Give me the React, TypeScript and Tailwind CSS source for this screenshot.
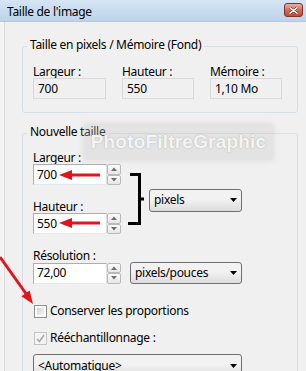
import React from "react";

function SpinBtn({ up }: { up?: boolean }) {
  return (
    <div className="flex-1 flex items-center justify-center border border-[#b9b9b9] rounded-[2px] bg-gradient-to-b from-[#fbfbfb] to-[#e6e6e6]">
      <svg width="6" height="4" viewBox="0 0 6 4">
        <path d={up ? "M0 4 L3 0.5 L6 4 Z" : "M0 0 L3 3.5 L6 0 Z"} fill="#6e6e6e" />
      </svg>
    </div>
  );
}

function Spinner() {
  return (
    <div className="flex flex-col w-[14px] h-[21px]">
      <SpinBtn up />
      <SpinBtn />
    </div>
  );
}

function Edit({ value }: { value: string }) {
  return (
    <div className="flex items-center">
      <div className="w-[74px] h-[21px] flex items-center pl-[3px] bg-white border border-[#abadb3] border-b-[#e3e9ef] border-r-[#dbdfe6]">
        {value}
      </div>
      <Spinner />
    </div>
  );
}

function Arrow() {
  return (
    <svg width="7" height="4" viewBox="0 0 7 4" className="shrink-0">
      <path d="M0 0 L7 0 L3.5 4 Z" fill="#000" />
    </svg>
  );
}

function ReadBox({ value }: { value: string }) {
  return (
    <div className="h-[21px] flex items-center pl-[4px] border border-[#d9d9d9] bg-[#f0f0f0]">
      {value}
    </div>
  );
}

export default function App() {
  return (
    <div className="relative w-[306px] h-[371px] overflow-hidden bg-[#f0f0f0] text-black text-[12px] leading-[16px] tracking-[-0.3px] font-['Noto_Sans',sans-serif]">
      {/* Title bar */}
      <div className="h-[22px] flex justify-between pl-[7px] pr-[3px] bg-gradient-to-b from-[#d6e5f4] to-[#bdd3ea] border-b border-[#b4c8dc]">
        <span className="mt-[4px]">Taille de l'image</span>
        <div className="mt-[3px] w-[19px] h-[14px] flex items-center justify-center rounded-[3px] border border-[#7a3428] bg-gradient-to-b from-[#eab1a4] via-[#d66c58] to-[#c24a35]">
          <svg width="9" height="7" viewBox="0 0 9 7">
            <path d="M1 0.8 L8 6.2 M8 0.8 L1 6.2" stroke="#5a1a10" strokeWidth="2.6" strokeLinecap="round" />
            <path d="M1 0.8 L8 6.2 M8 0.8 L1 6.2" stroke="#ffffff" strokeWidth="1.5" strokeLinecap="round" />
          </svg>
        </div>
      </div>

      <div className="flex h-[349px]">
        <div className="w-[5px] bg-[#f4f4f4] border-r border-[#dadada]" />
        <div className="flex-1 pl-[17px] pr-[8px]">
          {/* Group 1 */}
          <fieldset className="mt-[15px] border border-[#d5dfe5] rounded-[3px] px-[10px] pt-[10px] pb-[13px] min-w-0">
            <legend className="ml-[-6px] px-[3px] pb-[2px] leading-[16px]">Taille en pixels / Mémoire (Fond)</legend>
            <div className="grid grid-cols-[73px_72px_72px] gap-x-[16px]">
              <div className="leading-[13px] h-[13px]">Largeur :</div>
              <div className="leading-[13px] h-[13px]">Hauteur :</div>
              <div className="leading-[13px] h-[13px]">Mémoire :</div>
              <ReadBox value="700" />
              <ReadBox value="550" />
              <ReadBox value="1,10 Mo" />
            </div>
          </fieldset>

          {/* Group 2 */}
          <fieldset className="mt-[11px] border border-[#d5dfe5] rounded-[3px] px-[10px] pt-[9px] pb-[20px] min-w-0">
            <legend className="ml-[-6px] px-[3px] pb-[2px] leading-[16px]">Nouvelle taille</legend>
            <div className="flex">
              <div className="flex flex-col w-[88px]">
                <div className="leading-[13px] h-[13px]">Largeur :</div>
                <Edit value="700" />
                <div className="mt-[15px] leading-[13px] h-[13px]">Hauteur :</div>
                <Edit value="550" />
              </div>
              <div className="ml-[7px] mt-[22px] h-[52px] flex items-center">
                <svg width="16" height="52" viewBox="0 0 16 52" className="shrink-0">
                  <rect x="2" y="0" width="11" height="3" fill="#000" />
                  <rect x="10" y="0" width="3" height="52" fill="#000" />
                  <rect x="0" y="49" width="13" height="3" fill="#000" />
                  <rect x="13" y="24.5" width="3" height="3" fill="#000" />
                </svg>
                <div className="ml-[5px] mt-[2px] w-[93px] h-[23px] flex items-center justify-between pl-[4px] pr-[4px] border border-[#707070] rounded-[3px] bg-gradient-to-b from-[#f2f2f2] from-45% to-[#dcdcdc]">
                  <span>pixels</span>
                  <Arrow />
                </div>
              </div>
            </div>

            <div className="mt-[15px] leading-[13px] h-[13px]">Résolution :</div>
            <div className="flex items-center">
              <Edit value="72,00" />
              <div className="ml-[9px] w-[112px] h-[22px] flex items-center justify-between pl-[4px] pr-[4px] border border-[#707070] rounded-[3px] bg-gradient-to-b from-[#f2f2f2] from-45% to-[#dcdcdc]">
                <span>pixels/pouces</span>
                <Arrow />
              </div>
            </div>

            <div className="mt-[19px] h-[16px] flex items-center gap-[3px]">
              <div className="ml-[1px] w-[13px] h-[13px] border border-[#8f8f8f] bg-white p-[2px]">
                <div className="w-full h-full bg-gradient-to-br from-[#d4d4d4] to-[#f4f4f4]" />
              </div>
              <span>Conserver les proportions</span>
            </div>

            <div className="mt-[11px] h-[16px] flex items-center gap-[3px]">
              <div className="ml-[1px] w-[13px] h-[13px] border border-[#c4c4c4] bg-[#f4f4f4] flex items-center justify-center">
                <svg width="9" height="9" viewBox="0 0 9 9">
                  <path d="M1 5 L3.5 7.5 L8 1" stroke="#a8a8a8" strokeWidth="1.6" fill="none" />
                </svg>
              </div>
              <span>Rééchantillonnage :</span>
            </div>

            <div className="mt-[8px] w-[209px] h-[23px] flex items-center justify-between pl-[4px] pr-[4px] border border-[#707070] rounded-[3px] bg-gradient-to-b from-[#f2f2f2] from-45% to-[#dcdcdc]">
              <span>&lt;Automatique&gt;</span>
              <Arrow />
            </div>
          </fieldset>
        </div>
      </div>

      {/* Watermark overlay */}
      <div className="absolute left-[84px] top-[124px] w-[189px] h-[36px] rounded-[4px] bg-[#c8c8c8]/30 shadow-[0_0_4px_2px_rgba(200,200,200,0.3)] flex items-center justify-center pointer-events-none">
        <span className="font-['Liberation_Sans',sans-serif] font-bold text-[19px] leading-[20px] tracking-[0.2px] text-[#f4f4f4] [text-shadow:0_0_1.5px_#a9a9a9]">
          PhotoFiltreGraphic
        </span>
      </div>

      {/* Red arrows overlay */}
      <svg className="absolute left-0 top-0 pointer-events-none" width="306" height="371" viewBox="0 0 306 371">
        <g fill="#e3151c" stroke="#e3151c">
          <line x1="100" y1="175" x2="70" y2="175" strokeWidth="3" />
          <polygon points="59,175 72,170 72,180" stroke="none" />
          <line x1="100" y1="223" x2="70" y2="223" strokeWidth="3" />
          <polygon points="59,223 72,218 72,228" stroke="none" />
          <line x1="0" y1="257" x2="27" y2="295" strokeWidth="3" />
          <polygon points="33,304 21.4,296.3 29.6,290.5" stroke="none" />
        </g>
      </svg>
    </div>
  );
}
